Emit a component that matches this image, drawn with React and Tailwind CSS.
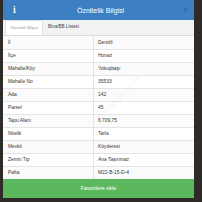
import React from "react";

const rows = [
  ["İl", "Denizli"],
  ["İlçe", "Honaz"],
  ["Mahalle/Köy", "Yokuşbaşı"],
  ["Mahalle No", "35533"],
  ["Ada", "142"],
  ["Parsel", "45"],
  ["Tapu Alanı", "6.709,75"],
  ["Nitelik", "Tarla"],
  ["Mevkii", "Köyderesi"],
  ["Zemin Tip", "Ana Taşınmaz"],
  ["Pafta", "M22-B-15-D-4"],
];

export default function App() {
  return (
    <div
      className="w-[202px] h-[202px] bg-[#2e2b28] pl-[3px] pr-[8px] overflow-hidden"
      style={{ fontFamily: '"Liberation Sans", Arial, sans-serif' }}
    >
      <div className="relative w-[191px] bg-white flex flex-col">
        {/* header */}
        <div className="h-[20px] bg-[#3c7fc2] flex items-center pl-[10px] pr-[6px] text-white">
          <span className="w-[10px] font-bold text-[9px] leading-none font-serif">i</span>
          <span className="flex-1 text-center text-[7px] leading-none">Öznitelik Bilgisi</span>
          <span className="w-[10px] text-right text-[9px] leading-none text-[#2a66a3]">×</span>
        </div>

        {/* tabs */}
        <div className="h-[16px] bg-[#f2f2f2] border-b border-[#dcdcdc] flex items-end pl-[2px]">
          <div className="h-[15px] w-[38px] bg-white border border-b-0 border-[#e2e2e2] flex items-center justify-center text-[4.2px] text-[#9a9a9a]">
            Öznitelik Bilgisi
          </div>
          <div className="h-[15px] flex items-center pl-[5px] text-[4.6px] text-[#444]">
            Bina/BB Listesi
          </div>
        </div>

        {/* table */}
        <div className="flex flex-col text-[4.9px] text-[#333]">
          {rows.map(([k, v], i) => (
            <div
              key={k}
              className={
                "h-[13px] flex border-t border-[#e4e4e4] first:border-t-0 " +
                (i % 2 === 0 ? "bg-[#fbfbfb]" : "bg-white")
              }
            >
              <div className="w-[91px] border-r border-[#e4e4e4] flex items-center pl-[5px]">{k}</div>
              <div className="flex-1 flex items-center pl-[4px]">{v}</div>
            </div>
          ))}
        </div>

        <div className="h-[19px] bg-[#5cb85c] flex items-center justify-center text-white text-[5.4px]">
          Favorilere ekle
        </div>

        {/* watermark */}
        <span className="absolute left-[86px] top-[90px] -rotate-45 text-[10px] text-black/[0.07] pointer-events-none">
          emlakjet.com
        </span>
      </div>
    </div>
  );
}
